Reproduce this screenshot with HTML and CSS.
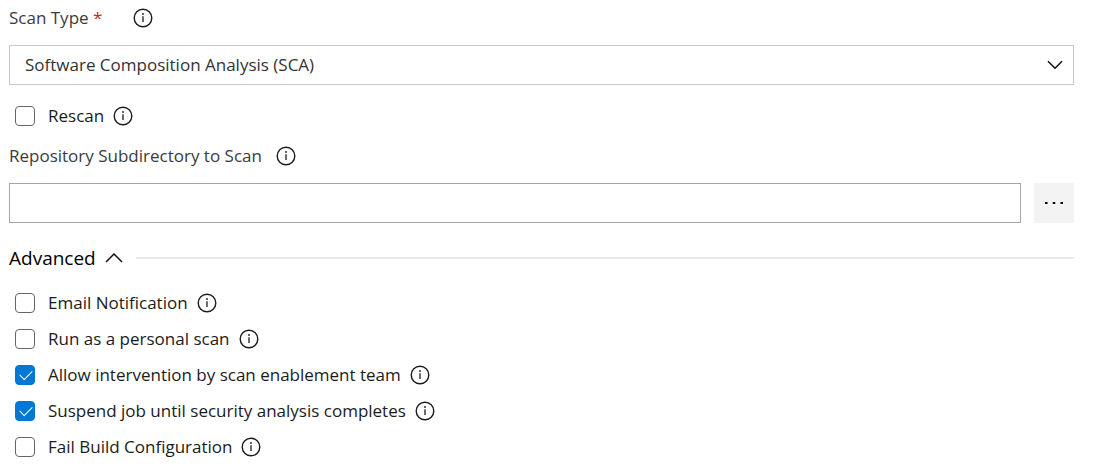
FILE: index.html
```html
<!DOCTYPE html>
<html lang="en">
<head>
<meta charset="utf-8">
<meta name="viewport" content="width=device-width, initial-scale=1">
<title>Scan settings</title>
<link rel="stylesheet" href="styles.css">
</head>
<body>
<svg class="symbols" aria-hidden="true">
  <symbol id="info" viewBox="0 0 20 20">
    <circle cx="10" cy="10" r="8.8" fill="none" stroke="currentColor" stroke-width="1.4"/>
    <path d="M10 8.2V14" fill="none" stroke="currentColor" stroke-width="1.3"/>
    <circle cx="10" cy="6" r="0.9" fill="currentColor"/>
  </symbol>
</svg>
<form class="task-form">
  <div class="label-row label-row-required">
    <label class="field-label" for="scan-type">Scan Type <span class="required">*</span></label>
    <button class="info" type="button" aria-label="About scan type"><svg class="info-icon"><use href="#info"/></svg></button>
  </div>
  <div class="select-box">
    <select class="select" id="scan-type"><option>Software Composition Analysis (SCA)</option></select>
    <svg class="select-arrow" viewBox="0 0 16 10" aria-hidden="true"><path d="M1 1.2L8 8.2L15 1.2"/></svg>
  </div>
  <div class="check-row check-row-single">
    <input class="check" type="checkbox" id="rescan"><label class="check-label" for="rescan">Rescan</label>
    <button class="info" type="button" aria-label="About rescan"><svg class="info-icon"><use href="#info"/></svg></button>
  </div>
  <div class="label-row">
    <label class="field-label" for="subdirectory">Repository Subdirectory to Scan</label>
    <button class="info" type="button" aria-label="About repository subdirectory"><svg class="info-icon"><use href="#info"/></svg></button>
  </div>
  <div class="path-row">
    <input class="text-input" type="text" id="subdirectory">
    <button class="browse" type="button" aria-label="Browse"><svg class="dots" viewBox="0 0 20 4" aria-hidden="true"><path d="M1 1h2.6v2H1zM8.7 1h2.6v2H8.7zM16.4 1h2.6v2h-2.6z"/></svg></button>
  </div>
  <div class="section-head">
    <button class="section-toggle" type="button" aria-expanded="true">Advanced<svg class="section-arrow" viewBox="0 0 18 10" aria-hidden="true"><path d="M1 9L9 1L17 9"/></svg></button>
    <span class="section-line"></span>
  </div>
  <div class="options">
    <div class="check-row">
      <input class="check" type="checkbox" id="email"><label class="check-label" for="email">Email Notification</label>
      <button class="info" type="button" aria-label="About email notification"><svg class="info-icon"><use href="#info"/></svg></button>
    </div>
    <div class="check-row">
      <input class="check" type="checkbox" id="personal"><label class="check-label" for="personal">Run as a personal scan</label>
      <button class="info" type="button" aria-label="About personal scan"><svg class="info-icon"><use href="#info"/></svg></button>
    </div>
    <div class="check-row">
      <input class="check" type="checkbox" id="intervention" checked><label class="check-label" for="intervention">Allow intervention by scan enablement team</label>
      <button class="info" type="button" aria-label="About intervention"><svg class="info-icon"><use href="#info"/></svg></button>
    </div>
    <div class="check-row">
      <input class="check" type="checkbox" id="suspend" checked><label class="check-label" for="suspend">Suspend job until security analysis completes</label>
      <button class="info" type="button" aria-label="About suspending the job"><svg class="info-icon"><use href="#info"/></svg></button>
    </div>
    <div class="check-row">
      <input class="check" type="checkbox" id="fail-build"><label class="check-label" for="fail-build">Fail Build Configuration</label>
      <button class="info" type="button" aria-label="About fail build configuration"><svg class="info-icon"><use href="#info"/></svg></button>
    </div>
  </div>
</form>
</body>
</html>
```

FILE: styles.css
```css
* {
  box-sizing: border-box;
}

body {
  margin: 0;
  background: #fff;
  color: #1b1b1b;
  font-family: "Segoe UI", "Open Sans", "Noto Sans", sans-serif;
  font-size: 17px;
  line-height: 24px;
}

button,
input,
select {
  margin: 0;
  padding: 0;
  border: 0;
  background: none;
  color: inherit;
  font: inherit;
}

.symbols {
  display: none;
}

.task-form {
  padding: 0 23px 0 9px;
}

.label-row,
.check-row {
  display: flex;
  align-items: center;
  min-height: 36px;
}

.label-row {
  gap: 14px;
}

.label-row-required {
  gap: 31px;
}

.field-label {
  color: #3b3b3b;
}

.required {
  color: #c1272d;
}

.info {
  display: flex;
}

.info-icon {
  width: 20px;
  height: 20px;
}

.select-box {
  position: relative;
  margin-top: 9px;
}

.select {
  display: block;
  width: 100%;
  height: 40px;
  padding: 0 40px 0 15px;
  border: 1px solid #c8c8c8;
  border-radius: 0;
  background: #fff;
  color: #333;
  appearance: none;
}

.select-arrow {
  position: absolute;
  top: 15px;
  right: 11px;
  width: 16px;
  height: 10px;
  pointer-events: none;
}

.select-arrow path,
.section-arrow path {
  fill: none;
  stroke: #111;
  stroke-width: 1.5;
}

.check-row {
  padding-left: 6px;
}

.check-row-single {
  margin: 13px 0 4px;
}

.check {
  position: relative;
  flex: none;
  width: 20px;
  height: 20px;
  border: 1px solid #666;
  border-radius: 4px;
  background: #fff;
  appearance: none;
}

.check:checked {
  border-color: #0078d4;
  background: #0078d4;
}

.check:checked::after {
  content: "";
  position: absolute;
  top: 4px;
  left: 4px;
  width: 11px;
  height: 6px;
  border: solid #fff;
  border-width: 0 0 1px 1px;
  transform: rotate(-45deg);
}

.check-label {
  margin: 0 9px 0 13px;
}

.path-row {
  display: flex;
  gap: 13px;
  margin-top: 9px;
}

.text-input {
  flex: 1;
  min-width: 0;
  height: 40px;
  padding: 0 15px;
  border: 1px solid #a6a6a6;
}

.browse {
  display: flex;
  align-items: center;
  justify-content: center;
  width: 40px;
  height: 40px;
  background: #f3f3f3;
}

.dots {
  width: 20px;
  height: 4px;
  fill: #111;
}

.section-head {
  display: flex;
  align-items: center;
  gap: 13px;
  min-height: 36px;
  margin-top: 17px;
}

.section-toggle {
  display: flex;
  align-items: center;
  gap: 9px;
  color: #000;
  font-size: 19px;
}

.section-arrow {
  width: 18px;
  height: 10px;
}

.section-line {
  flex: 1;
  height: 2px;
  background: #eaeaea;
}

.options {
  margin-top: 9px;
}
```
